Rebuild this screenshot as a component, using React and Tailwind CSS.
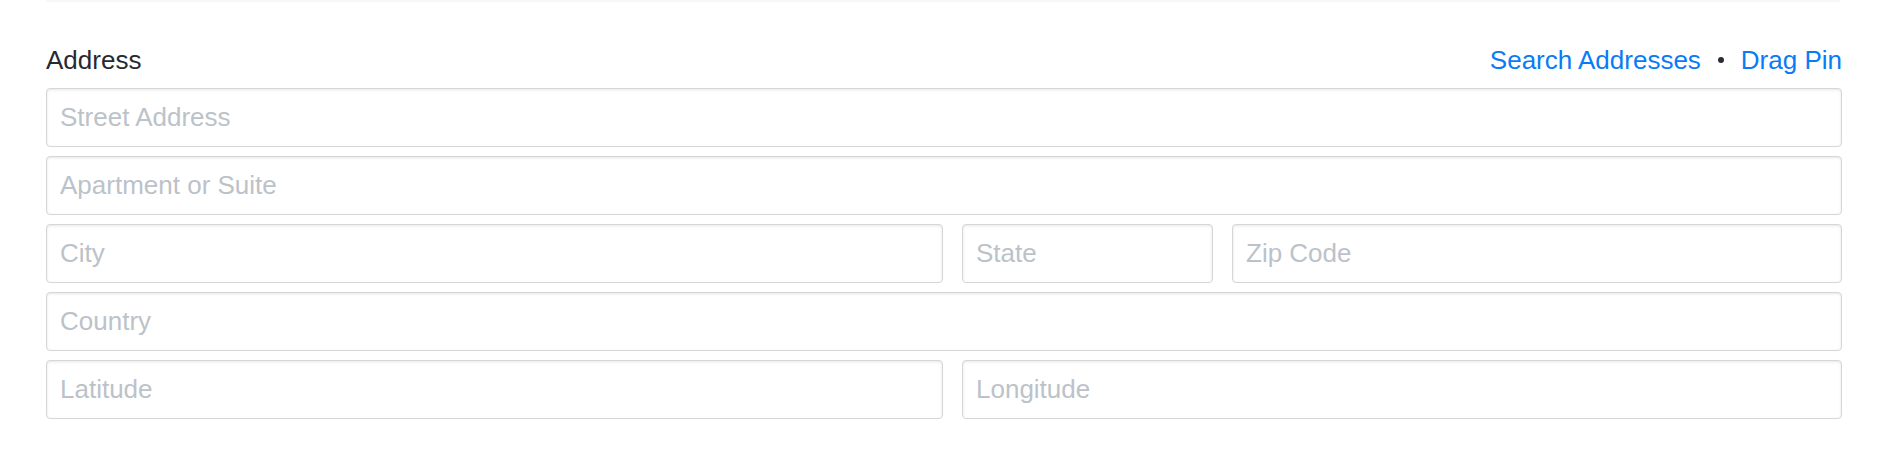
import React from "react";

function Field({ placeholder, className = "" }) {
  return (
    <input
      type="text"
      placeholder={placeholder}
      className={
        "h-[59px] rounded-[4px] border border-[#d6d6d6] bg-white pl-[13px] text-[26px] text-[#333] outline-none shadow-[inset_0_1px_3px_rgba(0,0,0,0.1)] placeholder:text-[#bcc2c9] " +
        className
      }
      style={{ fontFamily: '"Liberation Sans", Arial, sans-serif' }}
    />
  );
}

export default function App() {
  return (
    <div
      className="min-h-[476px] w-[1888px] bg-white"
      style={{ fontFamily: '"Liberation Sans", Arial, sans-serif' }}
    >
      <div className="ml-[46px] h-[2px] w-[1794px] bg-[#f5f8fb]" />
      <div className="ml-[46px] w-[1796px] pt-[43px]">
        <div className="flex items-center justify-between text-[26px] leading-[30px]">
          <span className="text-[#262a30]">Address</span>
          <div className="flex items-center">
            <span className="text-[#0a7bf7]">Search Addresses</span>
            <span className="mx-[17px] inline-block h-[6px] w-[6px] rounded-full bg-[#2a2d33]" />
            <span className="text-[#0a7bf7]">Drag Pin</span>
          </div>
        </div>
        <div className="mt-[13px] flex flex-col gap-[9px]">
          <Field placeholder="Street Address" className="w-full" />
          <Field placeholder="Apartment or Suite" className="w-full" />
          <div className="flex gap-[19px]">
            <Field placeholder="City" className="w-[897px] shrink-0" />
            <Field placeholder="State" className="w-[251px] shrink-0" />
            <Field placeholder="Zip Code" className="min-w-0 flex-1" />
          </div>
          <Field placeholder="Country" className="w-full" />
          <div className="flex gap-[19px]">
            <Field placeholder="Latitude" className="w-[897px] shrink-0" />
            <Field placeholder="Longitude" className="min-w-0 flex-1" />
          </div>
        </div>
      </div>
    </div>
  );
}
